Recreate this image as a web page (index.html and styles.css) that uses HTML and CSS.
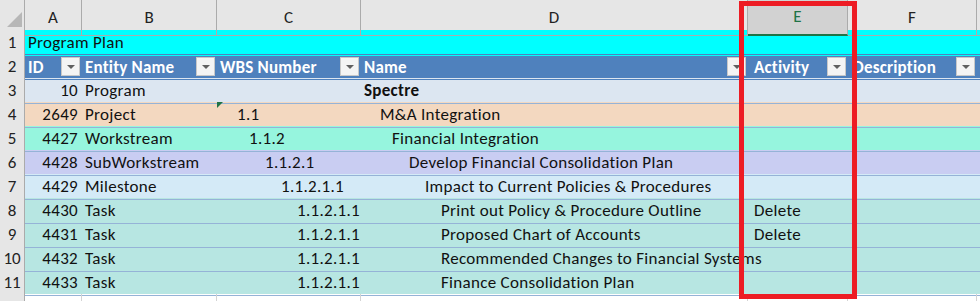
FILE: index.html
```html
<!DOCTYPE html>
<html lang="en">
<head>
    <meta charset="UTF-8">
    <title>Program Plan</title>
    <link rel="stylesheet" href="styles.css">
</head>
<body>

    <div class="sheet">

        <!-- Column letters -->
        <div class="row colheads">
            <div class="corner">
                <svg width="25" height="30" viewBox="0 0 25 30"><polygon points="22,12 22,27 7,27" fill="#b7b7b7"/></svg>
            </div>
            <div class="colhead">A</div>
            <div class="colhead">B</div>
            <div class="colhead">C</div>
            <div class="colhead">D</div>
            <div class="colhead selected">E</div>
            <div class="colhead">F</div>
            <div class="colhead last"></div>
        </div>

        <!-- Row 1 -->
        <div class="row title">
            <div class="rowhead">1</div>
            <div class="cell">Program Plan</div>
            <div class="cell"></div><div class="cell"></div><div class="cell"></div>
            <div class="cell"></div><div class="cell"></div><div class="cell"></div>
        </div>

        <!-- Row 2: table header -->
        <div class="row tablehead">
            <div class="rowhead">2</div>
            <div class="cell head"><span>ID</span><span class="filter"></span></div>
            <div class="cell head"><span>Entity Name</span><span class="filter"></span></div>
            <div class="cell head"><span>WBS Number</span><span class="filter"></span></div>
            <div class="cell head"><span>Name</span><span class="filter"></span></div>
            <div class="cell head act"><span>Activity</span><span class="filter"></span></div>
            <div class="cell head desc"><span>Description</span><span class="filter"></span></div>
            <div class="cell"></div>
        </div>

        <div class="row lvl-program">
            <div class="rowhead">3</div>
            <div class="cell num">10</div>
            <div class="cell">Program</div>
            <div class="cell"></div>
            <div class="cell"><b>Spectre</b></div>
            <div class="cell"></div><div class="cell"></div><div class="cell"></div>
        </div>

        <div class="row lvl-project">
            <div class="rowhead">4</div>
            <div class="cell num">2649</div>
            <div class="cell">Project</div>
            <div class="cell flagged"><span class="indent-1">1.1</span></div>
            <div class="cell"><span class="indent-1">M&amp;A Integration</span></div>
            <div class="cell"></div><div class="cell"></div><div class="cell"></div>
        </div>

        <div class="row lvl-workstream">
            <div class="rowhead">5</div>
            <div class="cell num">4427</div>
            <div class="cell">Workstream</div>
            <div class="cell"><span class="indent-2">1.1.2</span></div>
            <div class="cell"><span class="indent-2">Financial Integration</span></div>
            <div class="cell"></div><div class="cell"></div><div class="cell"></div>
        </div>

        <div class="row lvl-sub">
            <div class="rowhead">6</div>
            <div class="cell num">4428</div>
            <div class="cell">SubWorkstream</div>
            <div class="cell"><span class="indent-3">1.1.2.1</span></div>
            <div class="cell"><span class="indent-3">Develop Financial Consolidation Plan</span></div>
            <div class="cell"></div><div class="cell"></div><div class="cell"></div>
        </div>

        <div class="row lvl-milestone">
            <div class="rowhead">7</div>
            <div class="cell num">4429</div>
            <div class="cell">Milestone</div>
            <div class="cell"><span class="indent-4">1.1.2.1.1</span></div>
            <div class="cell"><span class="indent-4">Impact to Current Policies &amp; Procedures</span></div>
            <div class="cell"></div><div class="cell"></div><div class="cell"></div>
        </div>

        <div class="row lvl-task">
            <div class="rowhead">8</div>
            <div class="cell num">4430</div>
            <div class="cell">Task</div>
            <div class="cell"><span class="indent-5">1.1.2.1.1</span></div>
            <div class="cell"><span class="indent-5">Print out Policy &amp; Procedure Outline</span></div>
            <div class="cell act">Delete</div>
            <div class="cell"></div><div class="cell"></div>
        </div>

        <div class="row lvl-task">
            <div class="rowhead">9</div>
            <div class="cell num">4431</div>
            <div class="cell">Task</div>
            <div class="cell"><span class="indent-5">1.1.2.1.1</span></div>
            <div class="cell"><span class="indent-5">Proposed Chart of Accounts</span></div>
            <div class="cell act">Delete</div>
            <div class="cell"></div><div class="cell"></div>
        </div>

        <div class="row lvl-task">
            <div class="rowhead">10</div>
            <div class="cell num">4432</div>
            <div class="cell">Task</div>
            <div class="cell"><span class="indent-5">1.1.2.1.1</span></div>
            <div class="cell"><span class="indent-5">Recommended Changes to Financial Systems</span></div>
            <div class="cell"></div><div class="cell"></div><div class="cell"></div>
        </div>

        <div class="row lvl-task">
            <div class="rowhead">11</div>
            <div class="cell num">4433</div>
            <div class="cell">Task</div>
            <div class="cell"><span class="indent-5">1.1.2.1.1</span></div>
            <div class="cell"><span class="indent-5">Finance Consolidation Plan</span></div>
            <div class="cell"></div><div class="cell"></div><div class="cell"></div>
        </div>

        <!-- Empty row 12 (cut off) -->
        <div class="row blank">
            <div class="rowhead"></div>
            <div class="cell"></div><div class="cell"></div><div class="cell"></div>
            <div class="cell"></div><div class="cell"></div><div class="cell"></div>
            <div class="cell"></div>
        </div>

        <!-- highlight around column E -->
        <div class="highlight"></div>
    </div>

</body>
</html>
```

FILE: styles.css
```css
body {
    margin: 0;
    font-family: "Carlito", "Lato", sans-serif;
    font-size: 17px;
    letter-spacing: 0.3px;
    color: #111;
    background: #fff;
    overflow: hidden;
}

.sheet {
    position: relative;
    width: 980px;
    height: 301px;
    overflow: hidden;
}

.row {
    display: grid;
    grid-template-columns: 25px 57px 135px 144px 387px 100px 129px 3px;
    height: 24px;
}

/* column letters */
.colheads {
    height: 30px;
    background: #e6e6e6;
}

.corner {
    border-right: 1px solid #ababab;
    border-bottom: 1px solid #ababab;
    box-sizing: border-box;
    line-height: 0;
}

.colhead {
    box-sizing: border-box;
    border-right: 1px solid #ababab;
    border-bottom: 1px solid #ababab;
    text-align: center;
    line-height: 35px;
    letter-spacing: 0;
    color: #222;
}

.colhead.selected {
    background: #d2d2d2;
    color: #217346;
    border-bottom: 2px solid #217346;
    line-height: 34px;
}

.colhead.last {
    border-right: none;
}

/* row numbers */
.rowhead {
    background: #e6e6e6;
    box-sizing: border-box;
    border-right: 1px solid #ababab;
    border-bottom: 1px solid #d6d6d6;
    text-align: center;
    line-height: 25px;
    letter-spacing: 0;
    color: #222;
}

.cell {
    box-sizing: border-box;
    border-bottom: 1px solid #95b3d7;
    padding: 0 3px;
    line-height: 25px;
    white-space: nowrap;
    overflow: visible;
    position: relative;
}

.cell.num {
    text-align: right;
    padding-right: 4px;
}

.cell.act {
    padding-left: 6px;
}

.indent-1 { padding-left: 17px; }
.indent-2 { padding-left: 29px; }
.indent-3 { padding-left: 45px; }
.indent-4 { padding-left: 61px; }
.indent-5 { padding-left: 77px; }

.lvl-project .cell:nth-child(5) .indent-1 { padding-left: 16px; }
.lvl-workstream .cell:nth-child(5) .indent-2 { padding-left: 28px; }

/* row colours */
.title { background: #00ffff; }
.title .cell { border-bottom-color: #00ffff; }

.tablehead { background: #4f81bd; }
.tablehead .cell { border-bottom-color: #4f81bd; }

.lvl-program { background: #dce6f1; }
.lvl-project { background: #f3d8c0; }
.lvl-workstream { background: #96f5de; }
.lvl-sub { background: #c9cdf2; }
.lvl-milestone { background: #d4eaf7; }
.lvl-task { background: #b7e6e2; }

/* header with filter buttons */
.cell.head {
    display: flex;
    justify-content: space-between;
    align-items: center;
    color: #fff;
    font-weight: bold;
    letter-spacing: 0.2px;
    padding-right: 2px;
    overflow: hidden;
}

.cell.head span:first-child {
    padding-top: 2px;
}

.cell.desc {
    padding-left: 5px;
}

.filter {
    width: 17px;
    height: 17px;
    flex: none;
    background: #f4f4f4;
    border: 1px solid #c8c8c8;
    position: relative;
}

.filter::after {
    content: "";
    position: absolute;
    left: 5px;
    top: 7px;
    border-left: 4px solid transparent;
    border-right: 4px solid transparent;
    border-top: 4px solid #606060;
}

/* green error flag in the top-left corner of a cell */
.flagged::before {
    content: "";
    position: absolute;
    left: 0;
    top: 0;
    border-top: 6px solid #217346;
    border-right: 6px solid transparent;
}

.blank {
    height: 7px;
    background: #fff;
}

.blank .cell {
    border-bottom: none;
    border-right: 1px solid #d4d4d4;
}

.blank .rowhead {
    border-bottom: none;
}

.highlight {
    position: absolute;
    left: 739px;
    top: 1px;
    width: 118px;
    height: 298px;
    box-sizing: border-box;
    border: 5px solid #ed1c24;
}
```
